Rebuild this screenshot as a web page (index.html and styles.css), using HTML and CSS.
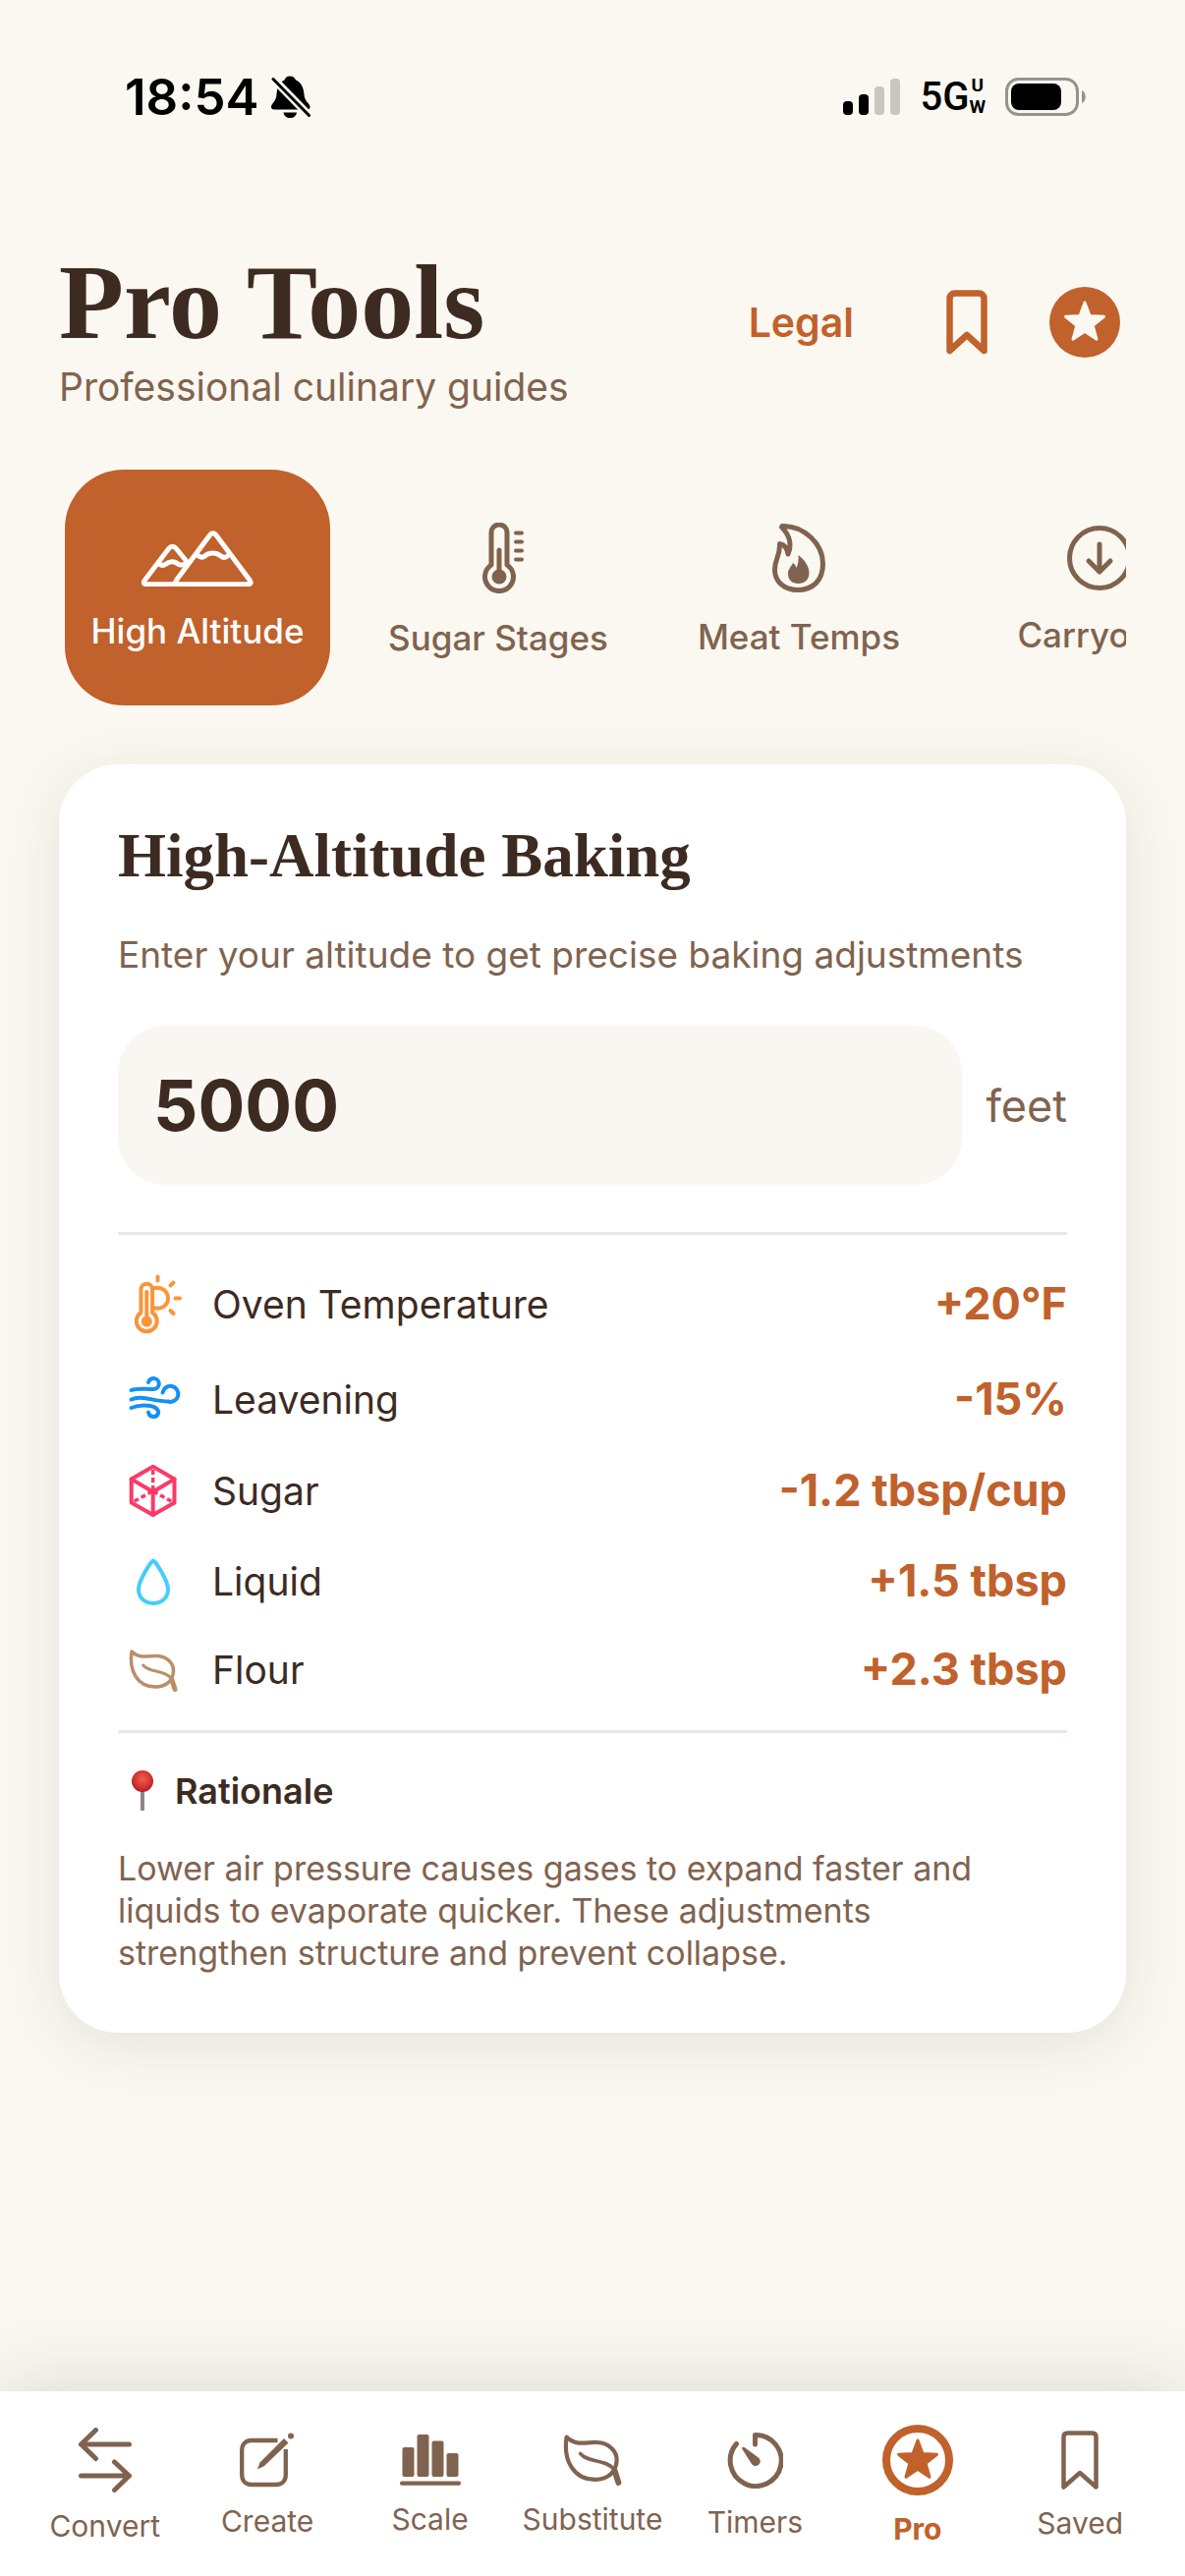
FILE: index.html
```html
<!DOCTYPE html>
<html lang="en">
  <head>
    <meta charset="UTF-8" />
    <meta name="viewport" content="width=device-width,initial-scale=1.0" />
    <title>Pro Tools</title>
    <link rel="stylesheet" href="styles.css">
  </head>
  <body>
    <svg class="defs" width="0" height="0" aria-hidden="true">
      <defs>
        <g id="star" stroke-width="3" stroke-linejoin="round">
          <path d="M36 16L41 29.6L55.5 30.2L44.1 39.2L48 53.2L36 45.2L24 53.2L27.9 39.2L16.5 30.2L31 29.6Z" />
        </g>
        <g id="leaf" fill="none" stroke="currentColor" stroke-linecap="round" stroke-linejoin="round">
          <path stroke-width="3.5" d="M14 8C22 16 31 12 40 12.5C50 13 57 20 56.5 28C56 37 50 44 38 44C20 44 11 28 14 8Z" />
          <path stroke-width="3" d="M25.7 22C32 30 46 26 54 35" />
          <path stroke-width="5" d="M55 37L58 46.5" />
        </g>
        <radialGradient id="pinHead" cx="0.5" cy="0.4" r="0.6">
          <stop offset="0" stop-color="#f0604e" />
          <stop offset="0.6" stop-color="#d93434" />
          <stop offset="1" stop-color="#a82227" />
        </radialGradient>
      </defs>
    </svg>

    <div class="status-bar">
      <div class="status-left">
        <span class="time">18:54</span>
        <svg width="40" height="43" viewBox="0 0 40 43">
          <path d="M19 .5C22 .5 24 2 25 4.500C31 7 33 13 33.500 19C34 27 39.500 28 39.500 32C39.500 34 38 34.500 36 34.500H3C1 34.500 0 33.500 0 32C0 28 5 27 5.500 19C6 13 8 7 13.500 4.500C14.500 2 16 .5 19 .5ZM12.500 37.500H26C25.500 41 23 43 19.300 43C15.500 43 13 41 12.500 37.500Z" />
          <path class="bell-gap" d="M1 2L39 41" />
          <path class="bell-slash" d="M2 3.500L38.500 40.500" />
        </svg>
      </div>
      <div class="status-right">
        <svg width="58" height="37" viewBox="0 0 58 37">
          <rect x="0" y="23" width="10" height="14" rx="4" />
          <rect x="16" y="16" width="10" height="21" rx="4" />
          <rect x="32" y="8" width="10" height="29" rx="4" fill="#c9c6c0" />
          <rect x="48" y="0" width="10" height="37" rx="4" fill="#c9c6c0" />
        </svg>
        <div class="network">
          <span>5G</span>
          <span class="network-band"><span>U</span><span>W</span></span>
        </div>
        <svg width="82" height="39" viewBox="0 0 82 39">
          <rect x="1.500" y="1.500" width="72" height="36" rx="12" fill="none" stroke="#96938c" stroke-width="3" />
          <rect x="6" y="6" width="51" height="27" rx="8" />
          <path d="M78 13C83 15 83 24 78 26Z" fill="#96938c" />
        </svg>
      </div>
    </div>

    <header class="header">
      <div>
        <h1>Pro Tools</h1>
        <p>Professional culinary guides</p>
      </div>
      <div class="header-actions">
        <a href="#legal" class="legal">Legal</a>
        <button type="button" class="icon-btn" aria-label="Bookmarks">
          <svg width="42" height="66" viewBox="0 0 42 66">
            <path d="M3.500 62V9C3.500 5.500 5.500 3.500 9 3.500H33C36.500 3.500 38.500 5.500 38.500 9V62L21 46Z" fill="none" stroke="currentColor" stroke-width="6.500" stroke-linejoin="round" />
          </svg>
        </button>
        <button type="button" class="icon-btn" aria-label="Pro">
          <svg width="72" height="72" viewBox="0 0 72 72">
            <circle cx="36" cy="36" r="36" fill="currentColor" />
            <use href="#star" fill="#fbf8f1" stroke="#fbf8f1" />
          </svg>
        </button>
      </div>
    </header>

    <main>
      <div class="tools">
        <button type="button" class="tool active">
          <svg width="114" height="57" viewBox="0 0 114 57">
            <g class="line-md">
              <path d="M72.700 2.700C74 2.700 75 3.200 76 4.700L110.500 51C112 53.500 111 54.700 108.500 54.700H37.500C34.500 54.700 34 53 35.500 50.500L69.500 4.700C70.500 3.200 71.500 2.700 72.700 2.700Z" />
              <path d="M46.500 32L35 18C33 15.500 30 15.500 28 18L3 51C1.500 53.500 2.500 54.700 5 54.700H38" />
              <path d="M57 25C60 28 62.500 28 65 25.500C69 22 76 22 80 25.500C83 28 86 28 88.500 25" />
              <path d="M18 34C20.500 36 23 35.500 25 34C28.500 31 34 31 37 34C39.500 35.500 41 35.500 44 34" />
            </g>
          </svg>
          <span>High Altitude</span>
        </button>
        <button type="button" class="tool">
          <svg width="52" height="72" viewBox="-10 0 52 72">
            <g class="line-md">
              <path d="M9 43V10A8 8 0 0 1 25 10V43A14.500 14.500 0 1 1 9 43Z" />
              <path d="M17 28V52" />
              <path d="M34 10.500H40M34 19.500H40M34 28.500H40M34 37.500H40" stroke-width="4" />
            </g>
            <circle cx="17" cy="55" r="7.500" fill="currentColor" />
          </svg>
          <span>Sugar Stages</span>
        </button>
        <button type="button" class="tool">
          <svg width="54" height="70" viewBox="0 0 54 70">
            <path class="line-md" d="M10 2.500C33 2 51.500 21 51.500 41C51.500 58 41 67.500 26 67.500C11 67.500 2.500 58 2.500 47C2.500 36 8 33 7.500 20.500C12 21 15 25 16 31C20 22 18 12 9.500 3.500Z" />
            <path fill="currentColor" d="M26.500 32C32 36 37.500 43 37.500 50C37.500 57 33 61 26.500 61C20 61 16 57 16 51C16 46 19 44 21 40C23 41.500 24 43 24.500 45C26 42 27 37 26.500 32Z" />
          </svg>
          <span>Meat Temps</span>
        </button>
        <button type="button" class="tool">
          <svg width="66" height="66" viewBox="0 0 66 66">
            <g class="line-md">
              <circle cx="33" cy="33" r="30.500" />
              <path d="M33 19V46M22 36L33 47L44 36" />
            </g>
          </svg>
          <span>Carryover</span>
        </button>
      </div>

      <section class="card">
        <h2>High-Altitude Baking</h2>
        <p class="intro">Enter your altitude to get precise baking adjustments</p>

        <div class="altitude">
          <input type="text" id="altitude" name="altitude" inputmode="numeric" value="5000" />
          <label for="altitude">feet</label>
        </div>

        <dl class="adjustments">
          <div class="adjustment">
            <dt>
              <svg width="72" height="64" viewBox="-17 -2 72 64" color="#f9953a">
                <g class="line-sm">
                  <path d="M6.500 39V15.500A5.800 5.800 0 0 1 18.100 15.500V39A10.500 10.500 0 1 1 6.500 39Z" />
                  <path d="M12.300 18V48" />
                  <path d="M19 14.200C27 12 34 17 34 24.500C34 32 27 36 19 34.300" />
                  <path d="M23.500 2.500V6.500M39.500 8.500L36.500 11.500M41.500 24.500H46M36.500 37L39.500 40" />
                </g>
                <circle cx="12.300" cy="48" r="5.500" fill="currentColor" />
              </svg>
              Oven Temperature
            </dt>
            <dd>+20°F</dd>
          </div>
          <div class="adjustment">
            <dt>
              <svg width="72" height="58" viewBox="0 0 72 58" color="#1590f5">
                <g class="line-sm">
                  <path d="M13.500 20C20 17.500 27 19 36 19A5.500 5.500 0 1 0 31 12" />
                  <path d="M13.500 29.500C24 24.500 36 31.500 51 31.500A8 8 0 1 0 45.500 22.500" />
                  <path d="M13.500 38C20 35.500 28 35 33 36C38 37 41.200 39 41.200 43A5.200 5.200 0 0 1 31 42.500" />
                </g>
              </svg>
              Leavening
            </dt>
            <dd>-15%</dd>
          </div>
          <div class="adjustment">
            <dt>
              <svg width="72" height="56" viewBox="0 0 72 56" color="#fb3a67">
                <g class="line-sm">
                  <path d="M35.700 3.700L57.500 16.500V40.500L35.700 53L13.700 40.500V16.500Z" />
                  <path d="M13.700 16.500L35.700 29.500L57.500 16.500M35.700 29.500V53" />
                </g>
                <path d="M35.700 28V4M36 29L57 40.500M35 29L14 40.500" fill="none" stroke="currentColor" stroke-width="3.500" stroke-dasharray="5 3" />
              </svg>
              Sugar
            </dt>
            <dd>-1.2 tbsp/cup</dd>
          </div>
          <div class="adjustment">
            <dt>
              <svg width="72" height="56" viewBox="0 0 72 56" color="#45cdfb">
                <path class="line-sm" d="M36 7.500C38 7.500 51 28 51 36.500C51 45 45 51 36 51C27 51 21 45 21 36.500C21 28 34 7.500 36 7.500Z" />
              </svg>
              Liquid
            </dt>
            <dd>+1.5 tbsp</dd>
          </div>
          <div class="adjustment">
            <dt>
              <svg width="72" height="52" viewBox="0 0 72 52" color="#ba8f68">
                <use href="#leaf" />
              </svg>
              Flour
            </dt>
            <dd>+2.3 tbsp</dd>
          </div>
        </dl>

        <h3>
          <svg width="48" height="42" viewBox="0 0 48 42">
            <rect x="23" y="20" width="4" height="21" rx="1" fill="#8e8684" />
            <circle cx="25" cy="11" r="11" fill="url(#pinHead)" />
          </svg>
          Rationale
        </h3>
        <p class="rationale">
          Lower air pressure causes gases to expand faster and liquids to evaporate quicker. These adjustments strengthen structure and prevent collapse.
        </p>
      </section>
    </main>

    <nav class="tab-bar">
      <a href="#convert" class="tab">
        <svg width="54" height="66" viewBox="0 0 54 66">
          <path class="line-md" d="M51.500 17H2.500L17.500 2.500M2.500 17L17.500 31.500M2.500 49H51.500L36.500 35M51.500 49L36.500 63.500" />
        </svg>
        <span>Convert</span>
      </a>
      <a href="#create" class="tab">
        <svg width="56" height="56" viewBox="0 0 56 56">
          <path d="M38.500 8H12C6 8 2.200 12 2.200 18V43C2.200 49 6 53 12 53H37C43 53 46.800 49 46.800 43V17" fill="none" stroke="currentColor" stroke-width="4.300" />
          <path d="M18 37.500L20.500 30.500L45 6L49.500 10.500L25 34Z" fill="currentColor" />
          <circle cx="52" cy="3.500" r="3" fill="currentColor" />
        </svg>
        <span>Create</span>
      </a>
      <a href="#scale" class="tab">
        <svg width="62" height="52" viewBox="0 0 62 52" fill="currentColor">
          <rect x="2.500" y="13" width="12" height="30" rx="2" />
          <rect x="17.500" y="0" width="12" height="43" rx="2" />
          <rect x="32.500" y="6.500" width="12" height="36.500" rx="2" />
          <rect x="47.500" y="19" width="12" height="24" rx="2" />
          <rect x="0" y="47.500" width="62" height="4.300" rx="2" />
        </svg>
        <span>Scale</span>
      </a>
      <a href="#substitute" class="tab">
        <svg width="60" height="52" viewBox="11 6 50 43">
          <use href="#leaf" />
        </svg>
        <span>Substitute</span>
      </a>
      <a href="#timers" class="tab">
        <svg width="57" height="57" viewBox="0 0 57 57">
          <path class="line-md" d="M28.500 12V2.500A26 26 0 1 1 9.500 11.500" />
          <path fill="currentColor" d="M15.200 16.500C14.800 15 16 14.300 17.500 15L31.500 25.200A4.800 4.800 0 1 1 25 32Z" />
        </svg>
        <span>Timers</span>
      </a>
      <a href="#pro" class="tab active">
        <svg width="72" height="72" viewBox="0 0 72 72">
          <circle cx="36" cy="36" r="32" fill="none" stroke="currentColor" stroke-width="8" />
          <use href="#star" fill="currentColor" stroke="currentColor" />
        </svg>
        <span>Pro</span>
      </a>
      <a href="#saved" class="tab">
        <svg width="38" height="60" viewBox="0 0 38 60">
          <path d="M2.500 57.500V6.500C2.500 4 4 2.500 6.500 2.500H31.500C34 2.500 35.500 4 35.500 6.500V57.500L19 43Z" fill="none" stroke="currentColor" stroke-width="4.500" stroke-linejoin="round" />
        </svg>
        <span>Saved</span>
      </a>
    </nav>
  </body>
</html>
```
FILE: styles.css
```css
* {
  box-sizing: border-box;
}
body {
  min-height: 100vh;
  margin: 0;
  display: flex;
  flex-direction: column;
  font-family: "Inter", sans-serif;
  background: #fbf8f1;
  color: #3d2b22;
}
h1,
h2,
h3,
p,
dl,
dd {
  margin: 0;
}
svg {
  display: block;
  flex-shrink: 0;
}
button {
  padding: 0;
  border: none;
  background: none;
  font-family: inherit;
  cursor: pointer;
}
a {
  text-decoration: none;
}
.defs {
  position: absolute;
}
.line-md,
.line-sm {
  fill: none;
  stroke: currentColor;
  stroke-width: 5;
  stroke-linecap: round;
  stroke-linejoin: round;
}
.line-sm {
  stroke-width: 4;
}

/* status bar */
.status-bar {
  display: flex;
  justify-content: space-between;
  align-items: center;
  height: 196px;
  padding: 0 101px 0 127px;
  color: #000;
}
.status-left,
.status-right,
.network {
  display: flex;
  align-items: center;
}
.status-left {
  gap: 12px;
}
.status-right {
  gap: 20px;
}
.time {
  font-size: 51px;
  font-weight: 600;
}
.bell-gap,
.bell-slash {
  stroke: #fbf8f1;
  stroke-width: 8;
}
.bell-slash {
  stroke: #000;
  stroke-width: 3;
  stroke-linecap: round;
}
.network {
  font-family: "Roboto", sans-serif;
  font-size: 40px;
  font-weight: 500;
}
.network-band {
  display: flex;
  flex-direction: column;
  align-items: center;
  font-size: 19px;
  font-weight: 700;
  line-height: 22px;
}

/* header */
.header {
  display: flex;
  justify-content: space-between;
  align-items: center;
  padding: 48px 66px 0 60px;
}
.header h1 {
  font-family: Georgia, "Liberation Serif", serif;
  font-size: 108px;
  font-weight: 700;
  line-height: 128px;
}
.header p {
  margin-top: 4px;
  font-size: 39px;
  line-height: 36px;
  color: #80634f;
}
.header-actions {
  display: flex;
  align-items: center;
  color: #c1612b;
}
.legal {
  margin-right: 94px;
  font-size: 41px;
  font-weight: 600;
  color: inherit;
}
.icon-btn {
  color: inherit;
}
.icon-btn + .icon-btn {
  margin-left: 63px;
}

/* tool picker */
main {
  padding: 66px 60px 0;
}
.tools {
  display: flex;
  gap: 36px;
  padding-left: 6px;
  overflow: hidden;
}
.tool {
  display: flex;
  flex-direction: column;
  align-items: center;
  justify-content: center;
  gap: 24px;
  flex: 0 0 270px;
  height: 240px;
  padding-top: 6px;
  border-radius: 60px;
  font-size: 35px;
  font-weight: 500;
  line-height: 42px;
  white-space: nowrap;
  color: #80634f;
}
.tool.active {
  background: #c1612b;
  color: #fff;
}

/* card */
.card {
  margin-top: 60px;
  padding: 60px;
  border-radius: 60px;
  background: #fff;
  box-shadow: 0 12px 60px rgba(40, 40, 30, 0.1);
}
.card h2 {
  font-family: Georgia, "Liberation Serif", serif;
  font-size: 63px;
  font-weight: 700;
  line-height: 66px;
}
.intro {
  margin-top: 44px;
  font-size: 37px;
  line-height: 48px;
  color: #80634f;
}
.altitude {
  display: flex;
  align-items: center;
  gap: 24px;
  margin-top: 48px;
}
.altitude input {
  flex: 1;
  min-width: 0;
  height: 162px;
  padding: 0 36px;
  border: none;
  border-radius: 48px;
  background: #faf7f2;
  font-family: inherit;
  font-size: 71px;
  font-weight: 700;
  color: #3d2b22;
}
.altitude label {
  font-size: 45px;
  color: #80634f;
}
.adjustments {
  display: flex;
  flex-direction: column;
  gap: 36px;
  margin-top: 48px;
  padding: 38px 0 36px;
  border-top: 3px solid #e9e8e5;
  border-bottom: 3px solid #eae8e0;
}
.adjustment {
  display: flex;
  justify-content: space-between;
  align-items: center;
}
.adjustment dt {
  display: flex;
  align-items: center;
  gap: 24px;
  font-size: 39px;
}
.adjustment dd {
  font-size: 45px;
  font-weight: 700;
  line-height: 52px;
  color: #c1612b;
}
.card h3 {
  display: flex;
  align-items: center;
  gap: 10px;
  margin-top: 38px;
  font-size: 36px;
  font-weight: 600;
  line-height: 42px;
}
.rationale {
  margin-top: 36px;
  padding-right: 48px;
  font-size: 34px;
  line-height: 43px;
  color: #80634f;
}

/* bottom tab bar */
.tab-bar {
  display: flex;
  height: 188px;
  margin-top: auto;
  padding: 4px 24px 0;
  background: #fff;
  box-shadow: 0 -12px 72px rgba(40, 40, 30, 0.12);
}
.tab {
  display: flex;
  flex: 1 1 0;
  flex-direction: column;
  align-items: center;
  justify-content: center;
  gap: 16px;
  font-size: 30px;
  line-height: 36px;
  color: #80634f;
}
.tab.active {
  color: #c1612b;
  font-weight: 700;
}
```
